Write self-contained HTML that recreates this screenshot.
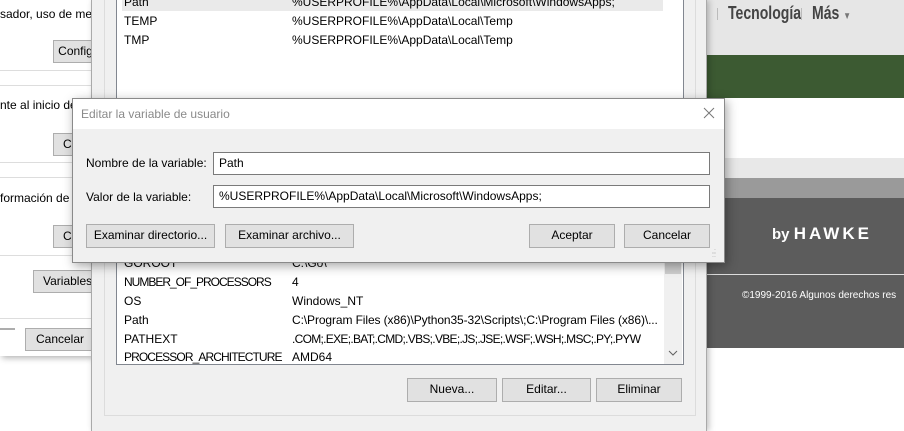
<!DOCTYPE html>
<html><head><meta charset="utf-8"><style>
*{margin:0;padding:0;box-sizing:border-box}
body{width:904px;height:431px;overflow:hidden;position:relative;background:#fff;font-family:"Liberation Sans",sans-serif;font-size:12px;color:#000}
.a{position:absolute}
.btn{position:absolute;background:#e1e1e1;border:1px solid #adadad;text-align:center;font-size:12px;line-height:21px;white-space:nowrap;overflow:hidden}
.t{position:absolute;white-space:nowrap}
</style></head><body>
<!-- website background -->
<div class="a" style="left:700px;top:0;width:204px;height:55px;background:#e6e6e6"></div>
<div class="t" style="left:728px;top:3px;font-size:18px;color:#444;font-weight:bold;transform:scaleX(.78);transform-origin:left">Tecnología</div>
<div class="a" style="left:717px;top:8px;width:1px;height:12px;background:#bbb"></div>
<div class="a" style="left:801px;top:8px;width:1px;height:12px;background:#bbb"></div>
<div class="t" style="left:812px;top:3px;font-size:18px;color:#444;font-weight:bold;transform:scaleX(.78);transform-origin:left">Más <span style="font-size:10px;color:#777">▼</span></div>
<div class="a" style="left:700px;top:55px;width:204px;height:43px;background:#3c5a32"></div>
<div class="a" style="left:700px;top:158px;width:204px;height:20px;background:#e8e8e8"></div>
<div class="a" style="left:700px;top:178px;width:204px;height:20px;background:#9a9a9a"></div>
<div class="a" style="left:700px;top:198px;width:204px;height:150px;background:#5c5c5c"></div>
<div class="t" style="left:772px;top:224px;color:#fff;font-size:15px;font-weight:bold">by <span style="font-size:17px;letter-spacing:3px">HAWKE</span></div>
<div class="a" style="left:707px;top:274px;width:197px;height:1px;background:#ddd"></div>
<div class="t" style="left:742px;top:290px;color:#fff;font-size:10px">©1999-2016 Algunos derechos res</div>

<!-- left window -->
<div class="a" style="left:0;top:0;width:92px;height:356px;background:#fff;box-shadow:2px 2px 6px rgba(0,0,0,.3)"></div>
<div class="t" style="left:0;top:7px">sador, uso de mem</div>
<div class="btn" style="left:53px;top:40px;width:45px">Config</div>
<div class="a" style="left:0;top:70px;width:92px;height:1px;background:#ddd"></div>
<div class="a" style="left:0;top:85px;width:92px;height:1px;background:#ddd"></div>
<div class="t" style="left:0;top:98px">nte al inicio de s</div>
<div class="btn" style="left:53px;top:133px;width:45px;text-align:left;padding-left:9px">Co</div>
<div class="a" style="left:0;top:162px;width:92px;height:1px;background:#ddd"></div>
<div class="a" style="left:0;top:177px;width:92px;height:1px;background:#ddd"></div>
<div class="t" style="left:0;top:191px">formación de de</div>
<div class="btn" style="left:53px;top:225px;width:45px;text-align:left;padding-left:9px">Co</div>
<div class="a" style="left:0;top:255px;width:92px;height:1px;background:#ddd"></div>
<div class="btn" style="left:33px;top:270px;width:70px;text-align:left;padding-left:9px">Variables d</div>
<div class="a" style="left:0;top:318px;width:92px;height:1px;background:#ddd"></div>
<div class="btn" style="left:-5px;top:328px;width:20px"></div>
<div class="btn" style="left:25px;top:328px;width:70px">Cancelar</div>

<!-- middle window -->
<div class="a" style="left:91px;top:0;width:616px;height:431px;background:#f0f0f0;border-left:1px solid #aaa;border-right:1px solid #aaa;box-shadow:2px 0 6px rgba(0,0,0,.25)"></div>
<div class="a" style="left:104px;top:0;width:592px;height:416px;border:1px solid #dcdcdc;border-top:none"></div>
<div class="a" style="left:116px;top:0;width:568px;height:365px;background:#fff;border:1px solid #828790;border-top:none;overflow:hidden"></div>
<div class="a" style="left:122px;top:0;width:541px;height:11px;background:#eaeaea"></div>
<div class="t" style="left:124px;top:-5px">Path</div><div class="t" style="left:292px;top:-5px">%USERPROFILE%\AppData\Local\Microsoft\WindowsApps;</div>
<div class="t" style="left:124px;top:14px">TEMP</div><div class="t" style="left:292px;top:14px">%USERPROFILE%\AppData\Local\Temp</div>
<div class="t" style="left:124px;top:33px">TMP</div><div class="t" style="left:292px;top:33px">%USERPROFILE%\AppData\Local\Temp</div>
<div class="a" style="left:664px;top:260px;width:18px;height:104px;background:#f0f0f0"></div>
<div class="a" style="left:665px;top:262px;width:16px;height:12px;background:#cdcdcd"></div>
<svg class="a" style="left:668px;top:350px" width="10" height="6"><path d="M1 1L5 5L9 1" stroke="#606060" fill="none"/></svg>
<div class="t" style="left:124px;top:256px">GOROOT</div><div class="t" style="left:292px;top:256px">C:\Go\</div>
<div class="t" style="left:124px;top:275px;letter-spacing:-1px">NUMBER_OF_PROCESSORS</div><div class="t" style="left:292px;top:275px">4</div>
<div class="t" style="left:124px;top:294px">OS</div><div class="t" style="left:292px;top:294px">Windows_NT</div>
<div class="t" style="left:124px;top:313px">Path</div><div class="t" style="left:292px;top:313px;letter-spacing:-.1px">C:\Program Files (x86)\Python35-32\Scripts\;C:\Program Files (x86)\...</div>
<div class="t" style="left:124px;top:332px">PATHEXT</div><div class="t" style="left:292px;top:332px;letter-spacing:-.7px">.COM;.EXE;.BAT;.CMD;.VBS;.VBE;.JS;.JSE;.WSF;.WSH;.MSC;.PY;.PYW</div>
<div class="t" style="left:124px;top:350px;height:14px;overflow:hidden;letter-spacing:-.9px">PROCESSOR_ARCHITECTURE</div><div class="t" style="left:292px;top:350px;height:14px;overflow:hidden">AMD64</div>
<div class="btn" style="left:407px;top:378px;width:90px;height:24px">Nueva...</div>
<div class="btn" style="left:502px;top:378px;width:89px;height:24px">Editar...</div>
<div class="btn" style="left:596px;top:378px;width:86px;height:24px">Eliminar</div>

<!-- dialog -->
<div class="a" style="left:72px;top:98px;width:653px;height:165px;background:#f0f0f0;border:1px solid #8a8a8a;box-shadow:2px 3px 10px rgba(0,0,0,.35)"></div>
<div class="a" style="left:73px;top:99px;width:651px;height:30px;background:#fff"></div>
<div class="t" style="left:81px;top:107px;color:#8a8a8a">Editar la variable de usuario</div>
<svg class="a" style="left:703px;top:107px" width="12" height="12"><path d="M1 1L11 11M11 1L1 11" stroke="#777" stroke-width="1"/></svg>
<div class="t" style="left:86px;top:156px">Nombre de la variable:</div>
<div class="a" style="left:213px;top:152px;width:497px;height:23px;background:#fff;border:1px solid #7a7a7a"></div>
<div class="t" style="left:219px;top:156px">Path</div>
<div class="t" style="left:86px;top:190px">Valor de la variable:</div>
<div class="a" style="left:213px;top:185px;width:497px;height:23px;background:#fff;border:1px solid #7a7a7a"></div>
<div class="t" style="left:219px;top:189px">%USERPROFILE%\AppData\Local\Microsoft\WindowsApps;</div>
<div class="btn" style="left:86px;top:224px;width:129px;height:24px">Examinar directorio...</div>
<div class="btn" style="left:225px;top:224px;width:129px;height:24px">Examinar archivo...</div>
<div class="btn" style="left:529px;top:224px;width:86px;height:24px">Aceptar</div>
<div class="btn" style="left:624px;top:224px;width:86px;height:24px">Cancelar</div>
<div class="t" style="left:712px;top:250px;font-size:7px;color:#aaa;line-height:4px">.:<br>::</div>
</body></html>
